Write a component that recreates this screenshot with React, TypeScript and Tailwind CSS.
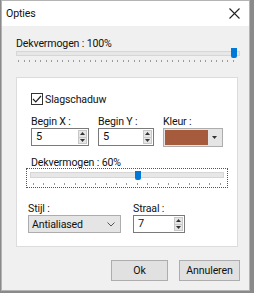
import React from "react";

const font = { fontFamily: 'Roboto, "Noto Sans", sans-serif' };

function Ticks({ n, className }: { n: number; className: string }) {
  return (
    <div className={"flex justify-between " + className}>
      {Array.from({ length: n }).map((_, i) => (
        <div key={i} className="w-px h-[2px] bg-[#9a9a9a]" />
      ))}
    </div>
  );
}

function Spin({ value, w }: { value: string; w: string }) {
  return (
    <div className={"flex h-[18px] border border-[#7a7a7a] bg-white " + w}>
      <div className="flex-1 pl-[4px] leading-[16px] text-[11px]">{value}</div>
      <div className="flex flex-col w-[9px] my-px mr-px">
        <div className="flex-1 flex items-center justify-center bg-[#e6e6e6] border border-[#c8c8c8]">
          <svg width="5" height="3" viewBox="0 0 5 3"><path d="M2.5 0L5 3H0z" fill="#333" /></svg>
        </div>
        <div className="flex-1 flex items-center justify-center bg-[#e6e6e6] border border-[#c8c8c8] border-t-0">
          <svg width="5" height="3" viewBox="0 0 5 3"><path d="M0 0H5L2.5 3z" fill="#333" /></svg>
        </div>
      </div>
    </div>
  );
}

export default function App() {
  return (
    <div className="w-[254px] h-[293px] bg-[#8a8a8a] text-[10.6px] tracking-[-0.15px] text-[#111]" style={font}>
      <div className="ml-px w-[249px] h-[291px] bg-[#f0f0f0] border border-[#b4b4b4] flex flex-col">
        <div className="h-[25px] bg-white flex items-center justify-between pl-[4px] pr-[9px]">
          <span>Opties</span>
          <svg width="11" height="11" viewBox="0 0 11 11">
            <path d="M0.5 0.5L10.5 10.5M10.5 0.5L0.5 10.5" stroke="#222" strokeWidth="1.1" />
          </svg>
        </div>
        <div className="flex flex-col pl-[14px] pr-[9px]">
          <div className="mt-[11px] leading-[13px]">Dekvermogen : 100%</div>
          <div className="relative mt-0 h-[16px] w-[224px]">
            <div className="absolute left-0 right-0 top-[1px] h-[5px] bg-[#e7e7e7] border border-[#d6d6d6]" />
            <div className="absolute right-[3px] top-[-2px] w-[6px] h-[10px] bg-[#0078d7] rounded-b-[2px]" />
            <Ticks n={40} className="absolute left-[2px] right-[6px] top-[10px]" />
          </div>
          <div className="mt-[11px] w-[222px] h-[170px] bg-white border border-[#dcdcdc] pl-[14px] flex flex-col">
            <div className="mt-[15px] flex items-center gap-[2px] h-[12px]">
              <div className="w-[12px] h-[12px] border border-[#333] flex items-center justify-center">
                <svg width="10" height="8" viewBox="0 0 10 8"><path d="M1 4L3.8 6.8L9 1" stroke="#222" strokeWidth="1.2" fill="none" /></svg>
              </div>
              <span className="leading-[13px]">Slagschaduw</span>
            </div>
            <div className="mt-[10px] flex">
              <div className="flex flex-col w-[67px]">
                <span className="leading-[13px]">Begin X :</span>
                <div><Spin value="5" w="w-[58px]" /></div>
              </div>
              <div className="flex flex-col w-[65px]">
                <span className="leading-[13px]">Begin Y :</span>
                <div><Spin value="5" w="w-[56px]" /></div>
              </div>
              <div className="flex flex-col">
                <span className="leading-[13px]">Kleur :</span>
                <div className="flex w-[60px] h-[19px] border border-[#adadad] bg-[#e5e5e5] p-px">
                  <div className="w-[43px] bg-[#a65b3c]" />
                  <div className="flex-1 flex items-center justify-center">
                    <svg width="5" height="3" viewBox="0 0 5 3"><path d="M0 0H5L2.5 3z" fill="#333" /></svg>
                  </div>
                </div>
              </div>
            </div>
            <div className="mt-[9px] leading-[13px]">Dekvermogen : 60%</div>
            <div className="relative -ml-[5px] mt-[-1px] w-[202px] h-[20px] border border-dotted border-[#555]">
              <div className="absolute left-[3px] right-[3px] top-[3px] h-[6px] bg-[#e7e7e7] border border-[#d6d6d6]" />
              <div className="absolute left-[108px] top-[2px] w-[6px] h-[9px] bg-[#0078d7] rounded-b-[2px]" />
              <Ticks n={19} className="absolute left-[6px] right-[6px] top-[14px]" />
            </div>
            <div className="mt-[14px] flex">
              <div className="flex flex-col w-[105px] -ml-[3px]">
                <span className="leading-[13px]">Stijl :</span>
                <div className="w-[93px] h-[18px] bg-[#e5e5e5] border border-[#adadad] flex items-center justify-between pl-[3px] pr-[5px]">
                  <span className="leading-[13px]">Antialiased</span>
                  <svg width="8" height="5" viewBox="0 0 8 5"><path d="M0.5 0.5L4 4L7.5 0.5" stroke="#555" fill="none" /></svg>
                </div>
              </div>
              <div className="flex flex-col">
                <span className="leading-[13px]">Straal :</span>
                <div><Spin value="7" w="w-[52px]" /></div>
              </div>
            </div>
          </div>
          <div className="mt-[13px] flex justify-end gap-[11px]">
            <div className="w-[57px] h-[21px] bg-[#e1e1e1] border border-[#adadad] flex items-center justify-center">Ok</div>
            <div className="w-[61px] h-[21px] bg-[#e1e1e1] border border-[#adadad] flex items-center justify-center">Annuleren</div>
          </div>
        </div>
      </div>
    </div>
  );
}
